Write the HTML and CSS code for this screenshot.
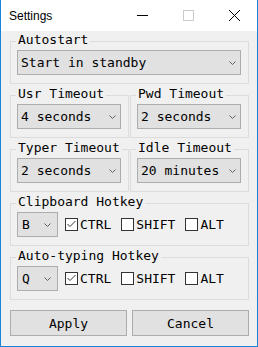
FILE: index.html
```html
<!DOCTYPE html>
<html lang="en">
<head>
    <meta charset="UTF-8">
    <title>Settings</title>
    <link rel="stylesheet" href="styles.css">
</head>
<body>
    <div class="window">
        <div class="titlebar">
            <span class="title">Settings</span>
            <span class="cap-btn"><svg width="11" height="11" viewBox="0 0 11 11"><line x1="0" y1="5.5" x2="11" y2="5.5" stroke="#000"/></svg></span>
            <span class="cap-btn"><svg width="11" height="11" viewBox="0 0 11 11"><rect x="0.5" y="0.5" width="10" height="10" fill="none" stroke="#cccccc"/></svg></span>
            <span class="cap-btn"><svg width="11" height="11" viewBox="0 0 11 11"><path d="M0 0L11 11M11 0L0 11" stroke="#000" stroke-width="1"/></svg></span>
        </div>
        <div class="content">
            <fieldset class="group">
                <legend>Autostart</legend>
                <div class="combo"><span>Start in standby</span><svg class="chev" width="7" height="4" viewBox="0 0 7 4"><polyline points="0.5,0.5 3.5,3.5 6.5,0.5" fill="none" stroke="#606060"/></svg></div>
            </fieldset>
            <div class="pair">
                <fieldset class="group">
                    <legend>Usr Timeout</legend>
                    <div class="combo"><span>4 seconds</span><svg class="chev" width="7" height="4" viewBox="0 0 7 4"><polyline points="0.5,0.5 3.5,3.5 6.5,0.5" fill="none" stroke="#606060"/></svg></div>
                </fieldset>
                <fieldset class="group">
                    <legend>Pwd Timeout</legend>
                    <div class="combo"><span>2 seconds</span><svg class="chev" width="7" height="4" viewBox="0 0 7 4"><polyline points="0.5,0.5 3.5,3.5 6.5,0.5" fill="none" stroke="#606060"/></svg></div>
                </fieldset>
            </div>
            <div class="pair">
                <fieldset class="group">
                    <legend>Typer Timeout</legend>
                    <div class="combo"><span>2 seconds</span><svg class="chev" width="7" height="4" viewBox="0 0 7 4"><polyline points="0.5,0.5 3.5,3.5 6.5,0.5" fill="none" stroke="#606060"/></svg></div>
                </fieldset>
                <fieldset class="group">
                    <legend>Idle Timeout</legend>
                    <div class="combo"><span>20 minutes</span><svg class="chev" width="7" height="4" viewBox="0 0 7 4"><polyline points="0.5,0.5 3.5,3.5 6.5,0.5" fill="none" stroke="#606060"/></svg></div>
                </fieldset>
            </div>
            <fieldset class="group">
                <legend>Clipboard Hotkey</legend>
                <div class="hotkey">
                    <div class="combo small"><span>B</span><svg class="chev" width="7" height="4" viewBox="0 0 7 4"><polyline points="0.5,0.5 3.5,3.5 6.5,0.5" fill="none" stroke="#606060"/></svg></div>
                    <label class="check"><span class="box"><svg width="11" height="11" viewBox="0 0 11 11"><polyline points="1.5,5 4,7.5 9.5,2" fill="none" stroke="#333"/></svg></span>CTRL</label>
                    <label class="check"><span class="box"></span>SHIFT</label>
                    <label class="check"><span class="box"></span>ALT</label>
                </div>
            </fieldset>
            <fieldset class="group">
                <legend>Auto-typing Hotkey</legend>
                <div class="hotkey">
                    <div class="combo small"><span>Q</span><svg class="chev" width="7" height="4" viewBox="0 0 7 4"><polyline points="0.5,0.5 3.5,3.5 6.5,0.5" fill="none" stroke="#606060"/></svg></div>
                    <label class="check"><span class="box"><svg width="11" height="11" viewBox="0 0 11 11"><polyline points="1.5,5 4,7.5 9.5,2" fill="none" stroke="#333"/></svg></span>CTRL</label>
                    <label class="check"><span class="box"></span>SHIFT</label>
                    <label class="check"><span class="box"></span>ALT</label>
                </div>
            </fieldset>
            <div class="buttons">
                <button>Apply</button>
                <button>Cancel</button>
            </div>
        </div>
    </div>
</body>
</html>
```

FILE: styles.css
```css
body { margin: 0; }
.window { width: 258px; height: 347px; box-sizing: border-box; border: 1px solid #1883d7; border-top: none; background: #f0f0f0; }
.titlebar { height: 31px; background: #fff; display: flex; align-items: center; padding-left: 8px; font: 12px "Liberation Sans", sans-serif; color: #000; }
.title { flex: 1; }
.cap-btn { width: 46px; height: 31px; display: flex; align-items: center; justify-content: center; }
.cap-btn svg { display: block; }
.content { padding: 2px 8px 0 9px; font: 13px "DejaVu Sans Mono", monospace; color: #000; }
.group { margin: 0 0 3px; padding: 0 7px 8px 6px; border: 1px solid #dcdcdc; min-width: 0; }
.group legend { padding: 0 2px 4px; margin-left: -1px; line-height: 13px; white-space: nowrap; }
.pair { display: grid; grid-template-columns: 1fr 1fr; gap: 1px; margin-bottom: 3px; }
.pair .group { margin: 0; }
.combo { height: 25px; box-sizing: border-box; border: 1px solid #adadad; background: #e1e1e1; display: flex; align-items: center; justify-content: space-between; padding: 0 4px 0 3px; white-space: nowrap; }
.chev { display: block; flex-shrink: 0; }
.combo.small { width: 41px; padding-left: 4px; padding-right: 6px; }
.hotkey { display: flex; align-items: center; }
.check { display: flex; align-items: center; gap: 2px; margin-left: 10px; }
.combo + .check { margin-left: 7px; }
.box { width: 13px; height: 13px; box-sizing: border-box; border: 1px solid #333; background: #fff; }
.box svg { display: block; }
.buttons { display: grid; grid-template-columns: 1fr 1fr; gap: 5px; margin-top: 10px; }
.buttons button { height: 26px; border: 1px solid #adadad; background: #e1e1e1; font: inherit; color: #000; padding: 0; }
```
